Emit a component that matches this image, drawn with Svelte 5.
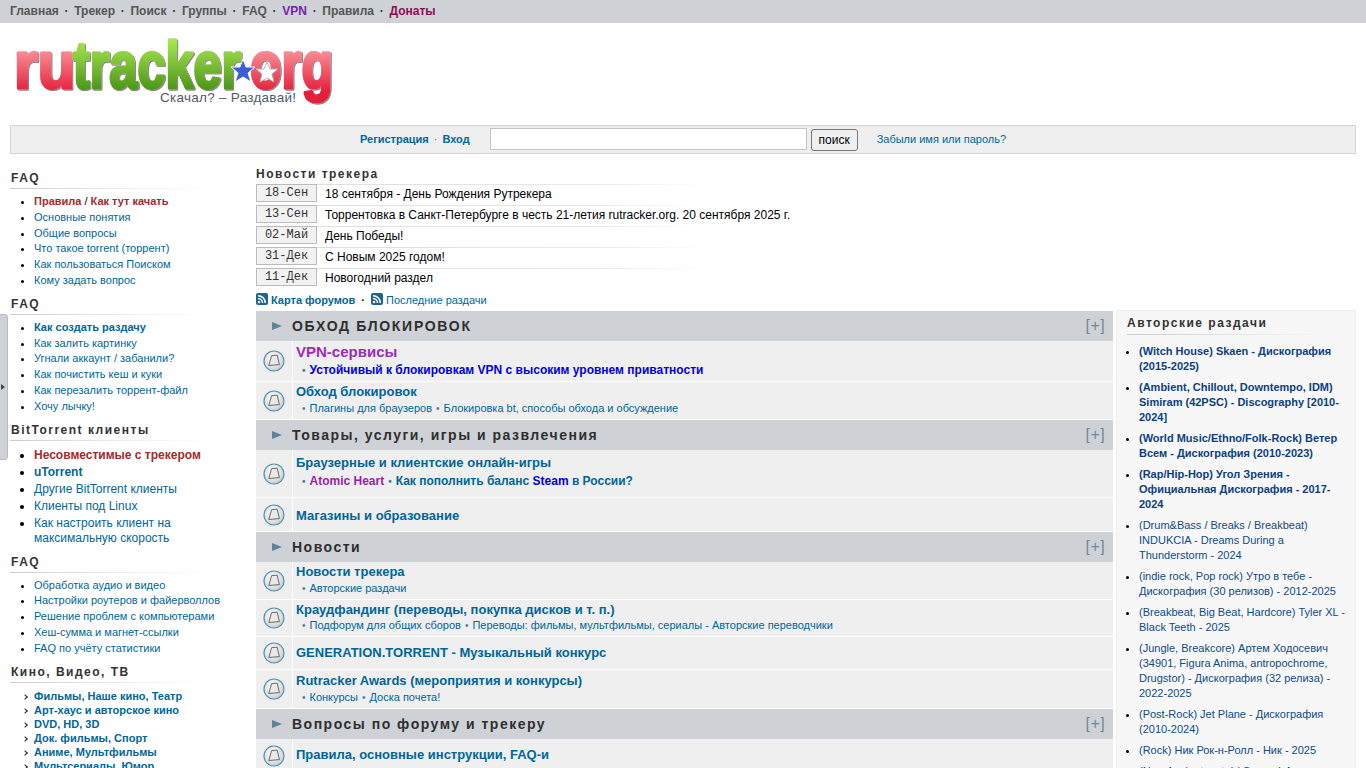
<script>
  const nav = [['Главная',''],['Трекер',''],['Поиск',''],['Группы',''],['FAQ',''],['VPN','vpn'],['Правила',''],['Донаты','don']];
  const news = [['18-Сен','18 сентября - День Рождения Рутрекера'],['13-Сен','Торрентовка в Санкт-Петербурге в честь 21-летия rutracker.org. 20 сентября 2025 г.'],['02-Май','День Победы!'],['31-Дек','С Новым 2025 годом!'],['11-Дек','Новогодний раздел']];
  const faq2 = ['Как залить картинку','Угнали аккаунт / забанили?','Как почистить кеш и куки','Как перезалить торрент-файл','Хочу лычку!'];
  const faq1 = ['Основные понятия','Общие вопросы','Что такое torrent (торрент)','Как пользоваться Поиском','Кому задать вопрос'];
  const faq3 = ['Обработка аудио и видео','Настройки роутеров и файерволлов','Решение проблем с компьютерами','Хеш-сумма и магнет-ссылки','FAQ по учёту статистики'];
  const kino = ['Фильмы, Наше кино, Театр','Арт-хаус и авторское кино','DVD, HD, 3D','Док. фильмы, Спорт','Аниме, Мультфильмы','Мультсериалы, Юмор'];
  const bold = ['(Witch House) Skaen - Дискография (2015-2025)','(Ambient, Chillout, Downtempo, IDM) Simiram (42PSC) - Discography [2010-2024]','(World Music/Ethno/Folk-Rock) Ветер Всем - Дискография (2010-2023)','(Rap/Hip-Hop) Угол Зрения - Официальная Дискография - 2017-2024'];
  const plain = ['(Drum&Bass / Breaks / Breakbeat) INDUKCIA - Dreams During a Thunderstorm - 2024','(indie rock, Pop rock) Утро в тебе - Дискография (30 релизов) - 2012-2025','(Breakbeat, Big Beat, Hardcore) Tyler XL - Black Teeth - 2025','(Jungle, Breakcore) Артем Ходосевич (34901, Figura Anima, antropochrome, Drugstor) - Дискография (32 релиза) - 2022-2025','(Post-Rock) Jet Plane - Дискография (2010-2024)','(Rock) Ник Рок-н-Ролл - Ник - 2025','(Neo-Ancient metal / Groove) А'];
</script>

{#snippet rss()}
  <svg class="rss" width="12" height="12" viewBox="0 0 12 12"><rect width="12" height="12" rx="2" fill="#1f6391"/><circle cx="3" cy="9" r="1.3" fill="#fff"/><path d="M2 5.5a4.5 4.5 0 0 1 4.5 4.5M2 2.7a7.3 7.3 0 0 1 7.3 7.3" fill="none" stroke="#fff" stroke-width="1.5"/></svg>
{/snippet}

{#snippet icon()}
  <svg width="22" height="22" viewBox="0 0 22 22"><defs><radialGradient id="ic" cx=".4" cy=".35" r=".75"><stop offset="0" stop-color="#fafafa"/><stop offset=".7" stop-color="#dcdcdc"/><stop offset="1" stop-color="#b5b5b5"/></radialGradient></defs><circle cx="11" cy="11" r="10" fill="url(#ic)" stroke="#4f93b8" stroke-width="1.2"/><path d="M8.6 5.6l5.6-.4 2.2 9.4-10.6.9z" fill="#e9e9e9" stroke="#6a6a6a" stroke-width="1" stroke-linejoin="round"/></svg>
{/snippet}

{#snippet cat(title, upper)}
  <div class="cat"><span class="tri"></span><span class="cat-t" class:upper>{title}</span><span class="plus">[+]</span></div>
{/snippet}

<div class="page">
  <nav class="top">
    {#each nav as [t, c], i}
      {#if i}<span class="dot">·</span>{/if}<a class={c} href="#top">{t}</a>
    {/each}
  </nav>

  <header class="logo-area">
    <svg class="logo" width="330" height="80" viewBox="0 0 330 80">
      <defs>
        <linearGradient id="red" gradientUnits="userSpaceOnUse" x1="0" y1="22" x2="0" y2="62"><stop offset="0" stop-color="#fb8a93"/><stop offset="1" stop-color="#e41f3a"/></linearGradient>
        <linearGradient id="green" gradientUnits="userSpaceOnUse" x1="0" y1="10" x2="0" y2="60"><stop offset="0" stop-color="#a8e84f"/><stop offset="1" stop-color="#4b9619"/></linearGradient>
      </defs>
      <g class="wm">
        <text class="r" x="4" y="58" textLength="61" lengthAdjust="spacingAndGlyphs">ru</text>
        <text class="g" x="63" y="58" textLength="168" lengthAdjust="spacingAndGlyphs">tracker</text>
        <text class="r" x="240" y="58" textLength="83" lengthAdjust="spacingAndGlyphs">org</text>
      </g>
      <polygon points="233,29 236,37 245,37 238,43 241,52 233,47 225,52 228,43 221,37 230,37" fill="#3a5fd6" stroke="#fff" stroke-width="1"/>
      <polygon points="257,32 260,39 268,39 262,44 264,52 257,48 250,52 252,44 246,39 254,39" fill="#fff" stroke="#b0b0b0" stroke-width="1"/>
      <text class="slogan" x="150" y="72" textLength="136">Скачал? – Раздавай!</text>
    </svg>
  </header>

  <div class="login">
    <a class="b" href="#top">Регистрация</a><span class="sep">·</span><a class="b" href="#top">Вход</a>
    <input class="q" type="text" aria-label="поиск" />
    <button>поиск</button>
    <a class="forgot" href="#top">Забыли имя или пароль?</a>
  </div>

  <div class="main">
    <aside class="side">
      <h3>FAQ</h3>
      <ul>
        <li><a class="red" href="#top">Правила</a> <span>/</span> <a class="red" href="#top">Как тут качать</a></li>
        {#each faq1 as t}<li><a href="#top">{t}</a></li>{/each}
      </ul>
      <h3>FAQ</h3>
      <ul>
        <li><a class="b" href="#top">Как создать раздачу</a></li>
        {#each faq2 as t}<li><a href="#top">{t}</a></li>{/each}
      </ul>
      <h3>BitTorrent клиенты</h3>
      <ul class="big">
        <li><a class="red" href="#top">Несовместимые с трекером</a></li>
        <li><a class="b" href="#top">uTorrent</a></li>
        <li><a href="#top">Другие BitTorrent клиенты</a></li>
        <li><a href="#top">Клиенты под Linux</a></li>
        <li><a href="#top">Как настроить клиент на максимальную скорость</a></li>
      </ul>
      <h3>FAQ</h3>
      <ul>{#each faq3 as t}<li><a href="#top">{t}</a></li>{/each}</ul>
      <h3>Кино, Видео, ТВ</h3>
      <ul class="arrows">{#each kino as t}<li><a class="b" href="#top">{t}</a></li>{/each}</ul>
    </aside>

    <main class="content">
      <h3 class="news-h">Новости трекера</h3>
      <div class="news">
        {#each news as [d, t]}
          <div class="n"><span class="date">{d}</span><span class="nt">{t}</span></div>
        {/each}
      </div>
      <div class="links">
        {@render rss()}<a class="b" href="#top">Карта форумов</a><span class="sep2">·</span>{@render rss()}<a href="#top">Последние раздачи</a>
      </div>
      <div class="cols">
        <div class="forums">
          {@render cat('ОБХОД БЛОКИРОВОК', true)}
          <div class="row h40"><div class="ic">{@render icon()}</div><div class="body">
            <a class="ft vpnt" href="#top">VPN-сервисы</a>
            <div class="subs strong gap2"><i>•</i><a class="blue" href="#top">Устойчивый к блокировкам VPN с высоким уровнем приватности</a></div>
          </div></div>
          <div class="row h37"><div class="ic">{@render icon()}</div><div class="body">
            <a class="ft" href="#top">Обход блокировок</a>
            <div class="subs"><i>•</i><a href="#top">Плагины для браузеров</a><i class="m">•</i><a href="#top">Блокировка bt, способы обхода и обсуждение</a></div>
          </div></div>
          {@render cat('Товары, услуги, игры и развлечения')}
          <div class="row h47"><div class="ic">{@render icon()}</div><div class="body pb4">
            <a class="ft" href="#top">Браузерные и клиентские онлайн-игры</a>
            <div class="subs strong tall"><i>•</i><a class="purple" href="#top">Atomic Heart</a><i class="m">•</i><a href="#top">Как пополнить баланс <span class="blue">Steam</span> в России?</a></div>
          </div></div>
          <div class="row h33"><div class="ic">{@render icon()}</div><div class="body pt4"><a class="ft" href="#top">Магазины и образование</a></div></div>
          {@render cat('Новости')}
          <div class="row h37"><div class="ic">{@render icon()}</div><div class="body">
            <a class="ft" href="#top">Новости трекера</a>
            <div class="subs"><i>•</i><a href="#top">Авторские раздачи</a></div>
          </div></div>
          <div class="row h36"><div class="ic">{@render icon()}</div><div class="body">
            <a class="ft" href="#top">Краудфандинг (переводы, покупка дисков и т. п.)</a>
            <div class="subs gap0"><i>•</i><a href="#top">Подфорум для общих сборов</a><i class="m">•</i><a href="#top">Переводы: фильмы, мультфильмы, сериалы - Авторские переводчики</a></div>
          </div></div>
          <div class="row h32"><div class="ic">{@render icon()}</div><div class="body pt2"><a class="ft" href="#top">GENERATION.TORRENT - Музыкальный конкурс</a></div></div>
          <div class="row h38"><div class="ic">{@render icon()}</div><div class="body pb0">
            <a class="ft" href="#top">Rutracker Awards (мероприятия и конкурсы)</a>
            <div class="subs"><i>•</i><a href="#top">Конкурсы</a><i class="m">•</i><a href="#top">Доска почета!</a></div>
          </div></div>
          {@render cat('Вопросы по форуму и трекеру')}
          <div class="row h33"><div class="ic">{@render icon()}</div><div class="body"><a class="ft" href="#top">Правила, основные инструкции, FAQ-и</a></div></div>
        </div>
        <aside class="author">
          <h3>Авторские раздачи</h3>
          <ul>
            {#each bold as t}<li><a class="bn" href="#top">{t}</a></li>{/each}
            {#each plain as t}<li><a class="nb" href="#top">{t}</a></li>{/each}
          </ul>
        </aside>
      </div>
    </main>
  </div>

  <div class="handle"><span></span></div>
</div>

<style>
  :global(html), :global(body) { margin: 0; overflow: hidden; background: #fff; }
  .page { font: 12px "Liberation Sans", Arial, sans-serif; color: #000; height: 768px; overflow: hidden; position: relative; }
  a { color: #006699; text-decoration: none; }
  .b { font-weight: 700; }

  .top { height: 23px; background: #ced2d6; padding: 0 0 1px 10px; box-sizing: border-box; display: flex; align-items: center; font-weight: 700; font-size: 12px; }
  .top a { color: #555; }
  .top a.vpn { color: #7d1ab0; }
  .top a.don { color: #8e0b56; }
  .dot { width: 15.4px; text-align: center; color: #333; }

  .logo-area { height: 102px; padding: 7px 0 0 10px; box-sizing: border-box; }
  .logo { display: block; overflow: visible; }
  .wm text { font: 700 66px "Liberation Sans", sans-serif; stroke-linejoin: round; stroke-width: 3px; filter: drop-shadow(0 0 .6px #f0b8e0) drop-shadow(1.2px 1.2px .6px #8a8a8a); }
  .wm .r { fill: url(#red); stroke: url(#red); }
  .wm .g { fill: url(#green); stroke: url(#green); }
  .slogan { font: 13.5px "Liberation Sans", sans-serif; fill: #555a68; }

  .login { margin: 0 10px; height: 29px; box-sizing: border-box; border: 1px solid #d5d5d5; background: #efefef; display: flex; align-items: center; justify-content: center; font-size: 11px; padding-bottom: 1px; }
  .sep { margin: 0 5px; color: #666; }
  .q { width: 317px; height: 22px; box-sizing: border-box; margin: 0 4px 0 20px; border: 1px solid #c4c4c4; background: #fff; padding: 0; }
  button { height: 22px; width: 47px; padding: 0; margin-top: 2px; font: 12px "Liberation Sans", sans-serif; color: #000; background: #f0f0f0; border: 1px solid #777; border-radius: 3px; }
  .forgot { margin-left: 19px; }

  .main { display: flex; padding: 0 10px; margin-top: 11px; }
  .side { width: 246px; flex: none; }
  h3 { margin: 0; font: 700 12px "Liberation Sans", sans-serif; letter-spacing: 1.5px; color: #333; }
  .side h3 { padding: 5px 0 2px 1px; height: 17px; line-height: 17px; background: linear-gradient(90deg, #ccc, #eee 60%, #fff) bottom left / 200px 1px no-repeat; width: 236px; margin-bottom: 5px; }
  .side ul { margin: 0 0 2px; padding: 0 0 0 24px; font-size: 11px; line-height: 15.8px; }
  .side ul.big { font-size: 12px; line-height: 15px; margin: 0 0 3px; padding-top: 2px; }
  .side ul.big li { margin-bottom: 2px; padding-right: 30px; }
  .side ul.arrows { list-style: none; line-height: 14px; margin-top: 6px; }
  .side ul.arrows li { position: relative; }
  .side ul.arrows li::before { content: ""; position: absolute; left: -11px; top: 6px; width: 3px; height: 3px; border-top: 1px solid #222; border-right: 1px solid #222; transform: rotate(45deg); }
  .red { color: #a52a2a; font-weight: 700; }

  .content { flex: 1; min-width: 0; }
  .news-h { line-height: 19px; height: 19px; }
  .n { height: 21px; display: flex; align-items: flex-start; background: linear-gradient(90deg, #ddd, #e8e8e8 75%, #fff) 0 0 / 450px 1px no-repeat; }
  .date { width: 61px; height: 18px; box-sizing: border-box; border: 1px solid #bbb; background: #f2f2f2; font: 12px/17px "Liberation Mono", monospace; text-align: center; color: #333; }
  .nt { margin-left: 8px; line-height: 20px; }

  .links { height: 22px; display: flex; align-items: center; font-size: 11px; padding-bottom: 1px; box-sizing: border-box; }
  .rss { margin-right: 3px; flex: none; margin-top: -1px; }
  .sep2 { margin: 0 6px; font-weight: 700; }

  .cols { display: flex; align-items: flex-start; gap: 3px; }
  .forums { width: 857px; flex: none; }
  .author { width: 240px; box-sizing: border-box; background: #f7f7f7; border: 1px solid #eee; padding: 4px 8px 0 10px; margin-top: -1px; }
  .author h3 { height: 20px; line-height: 17px; background: linear-gradient(90deg, #ccc, #eee 75%, #f7f7f7) bottom left / 200px 1px no-repeat; margin-bottom: 9px; width: 218px; }
  .author ul { margin: 0; padding: 0 0 0 12px; font-size: 11px; line-height: 15px; }
  .author li { margin-bottom: 6px; }
  .bn { color: #0d3f80; font-weight: 700; }
  .nb { color: #104a85; }

  .cat { height: 30px; background: #ced2d6; display: flex; align-items: center; box-sizing: border-box; padding-left: 16px; }
  .tri { width: 0; height: 0; border-left: 10px solid #5f8299; border-top: 4.5px solid transparent; border-bottom: 4.5px solid transparent; margin-right: 10px; }
  .cat-t { font-weight: 700; font-size: 14px; letter-spacing: 1.5px; color: #2e2e2e; flex: 1; margin-top: -1px; }
  .cat-t.upper { letter-spacing: 1.7px; }
  .plus { font-size: 16px; color: #6e8a9c; margin: -1px 8px 0 0; letter-spacing: .4px; }

  .row { display: flex; background: #efefef; border-bottom: 1px solid #fff; box-sizing: content-box; }
  .h40 { height: 40px; } .h38 { height: 38px; } .h47 { height: 47px; } .h33 { height: 33px; } .h37 { height: 37px; } .h36 { height: 36px; } .h32 { height: 32px; }
  .ic { width: 36px; flex: none; border-right: 1px solid #fff; display: flex; align-items: center; justify-content: center; }
  .body { flex: 1; display: flex; flex-direction: column; justify-content: center; padding: 0 0 2px 3px; }
  .pt4 { padding-top: 2px; padding-bottom: 0; } .pt2 { padding-top: 0; padding-bottom: 0; } .pb4 { padding-bottom: 4px; } .pb0 { padding-bottom: 0; }
  .ft { font-weight: 700; font-size: 13px; line-height: 16px; }
  .vpnt { color: #9a2cb8; font-size: 15px; line-height: 18px; }
  .subs { font-size: 11px; line-height: 15px; padding-left: 6px; margin-top: 1px; }
  .subs i { font-style: normal; color: #4a7f9f; margin-right: 4px; font-size: 10px; }
  .subs i.m { margin: 0 4px; }
  .subs.strong { font-size: 12px; font-weight: 700; }
  .subs.gap2 { margin-top: 2px; }
  .subs.gap0 { margin-top: 0; }
  .subs.tall { margin-top: 3px; }
  .blue { color: #0000e6; }
  .purple { color: #9a1fa8; }

  .handle { position: absolute; left: 0; top: 314px; width: 8px; height: 146px; box-sizing: border-box; background: #ced2d6; border: 1px solid #bbb; border-left: 0; border-radius: 0 4px 4px 0; display: flex; align-items: center; }
  .handle span { width: 0; height: 0; border-left: 4px solid #444; border-top: 3px solid transparent; border-bottom: 3px solid transparent; margin-left: 1px; }
</style>
